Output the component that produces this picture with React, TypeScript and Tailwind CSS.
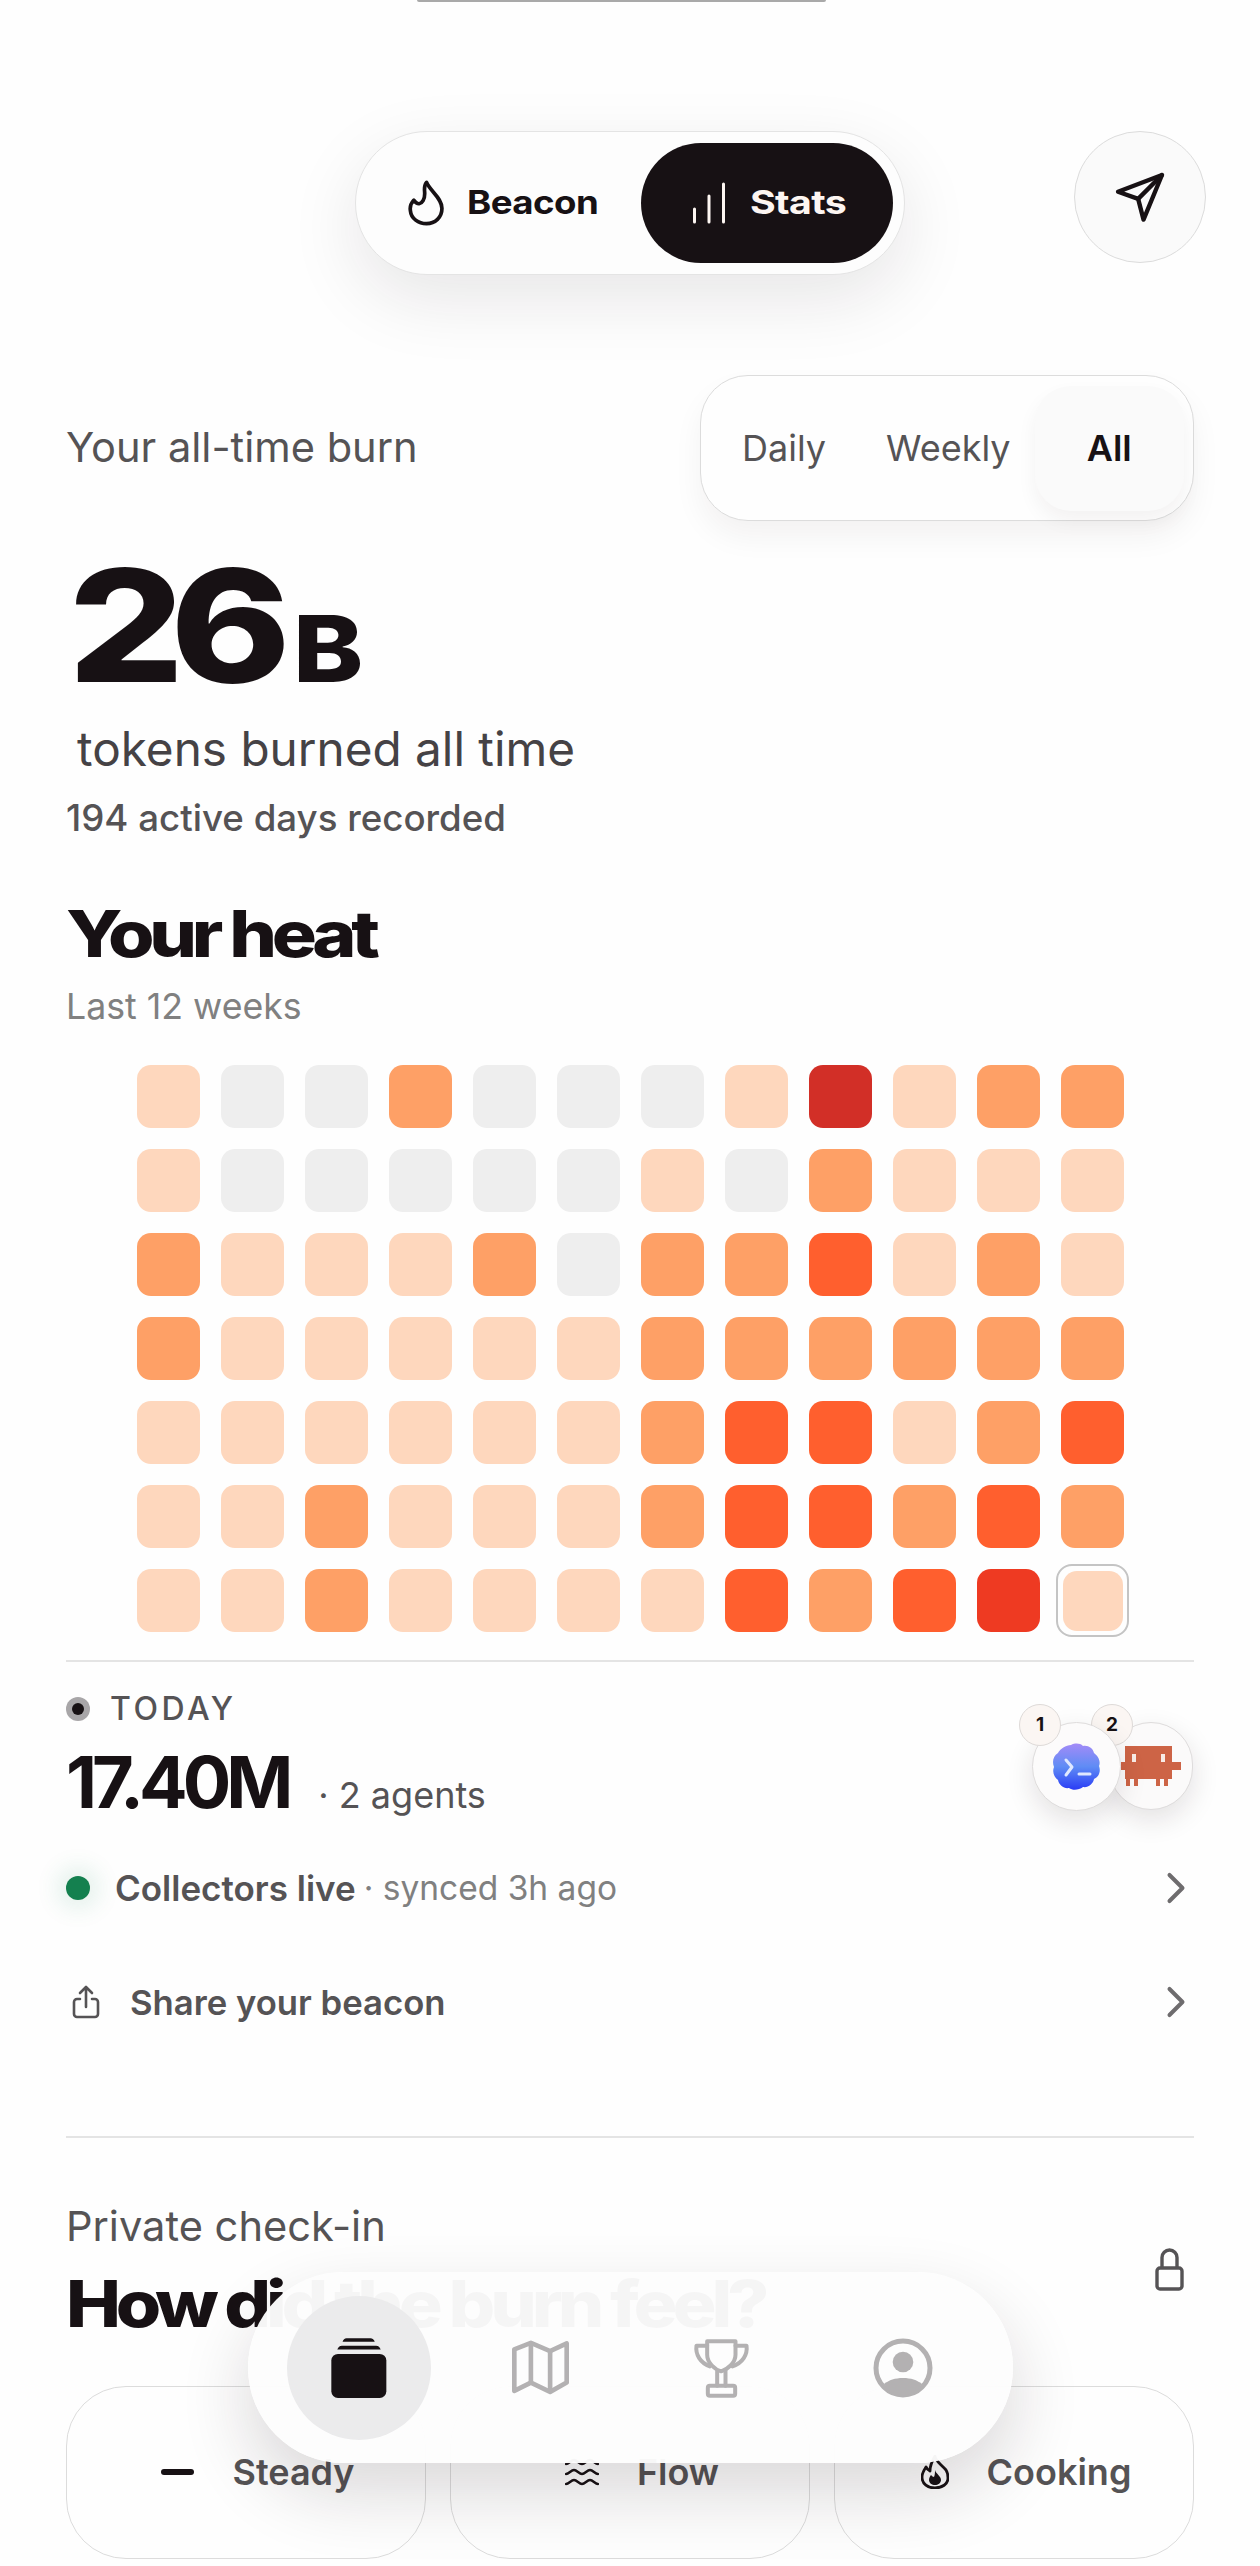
import React from 'react';
import { ChevronRight } from 'lucide-react';

const heat = [
  [1, 0, 0, 2, 0, 0, 0, 1, 5, 1, 2, 2],
  [1, 0, 0, 0, 0, 0, 1, 0, 2, 1, 1, 1],
  [2, 1, 1, 1, 2, 0, 2, 2, 3, 1, 2, 1],
  [2, 1, 1, 1, 1, 1, 2, 2, 2, 2, 2, 2],
  [1, 1, 1, 1, 1, 1, 2, 3, 3, 1, 2, 3],
  [1, 1, 2, 1, 1, 1, 2, 3, 3, 2, 3, 2],
  [1, 1, 2, 1, 1, 1, 1, 3, 2, 3, 4, 1],
];

const heatClass = [
  'bg-[#eeeeee]',
  'bg-[#fed7bd]',
  'bg-[#fea066]',
  'bg-[#ff5f2e]',
  'bg-[#ee3a22]',
  'bg-[#d22f27]',
];

const FlameIcon = () => (
  <svg viewBox="55 65 110 137" fill="none" stroke="#171114" strokeWidth="11" strokeLinecap="round" strokeLinejoin="round" className="h-[46px] w-[37px]">
    <path d="M110 72C96 88 112 108 100 126C94 136 84 142 72 125C64 134 60 144 62 156C64 180 86 195 110 195C136 195 156 176 156 150C156 118 122 100 110 72Z" />
  </svg>
);

const PlaneIcon = () => (
  <svg viewBox="40 35 155 155" fill="none" stroke="#171114" strokeWidth="13" strokeLinejoin="round" strokeLinecap="round" className="h-[52px] w-[52px]">
    <path d="M183 47 52 97l60 21 16 62z" />
    <path d="M183 47 112 118" />
  </svg>
);

const ShareIcon = () => (
  <svg viewBox="0 0 28 34" fill="none" stroke="#555355" strokeWidth="2.600" strokeLinecap="round" strokeLinejoin="round" className="h-[34px] w-[28px]">
    <path d="M14 22V2M8 8l6-6 6 6" />
    <path d="M8 14H5a3 3 0 0 0-3 3v12a3 3 0 0 0 3 3h18a3 3 0 0 0 3-3V17a3 3 0 0 0-3-3h-3" />
  </svg>
);

const LockIcon = () => (
  <svg viewBox="0 0 29 43" fill="none" stroke="#555355" strokeWidth="3.400" strokeLinejoin="round" className="h-[43px] w-[29px]">
    <rect x="2" y="20" width="25" height="21" rx="3" />
    <path d="M7 20V9.500a7.500 7.500 0 0 1 15 0V20" />
  </svg>
);

const AgentOne = () => (
  <svg viewBox="0 0 48 48" className="h-[48px] w-[48px]">
    <defs>
      <linearGradient id="agentBlue" x1="0" y1="0" x2="0" y2="1">
        <stop offset="0" stopColor="#a38bf7" />
        <stop offset="0.5" stopColor="#5f8cf5" />
        <stop offset="1" stopColor="#2a3cf5" />
      </linearGradient>
    </defs>
    <path d="M18 2c4-2 9-2 12 1 5-1 10 2 11 7 4 3 7 8 5 13 2 5 0 11-5 13-1 5-6 9-11 8-4 3-10 4-14 1-5 1-10-3-11-8-4-3-6-8-4-13-2-5-1-11 4-14 2-4 8-8 13-8z" fill="url(#agentBlue)" />
    <path d="M13 17l6 7-6 8" fill="none" stroke="#dfe8ff" strokeWidth="3" strokeLinecap="round" strokeLinejoin="round" />
    <path d="M26 31h11" stroke="#dfe8ff" strokeWidth="3" strokeLinecap="round" />
  </svg>
);

const AgentTwo = () => (
  <svg viewBox="0 0 60 40" className="h-[40px] w-[60px]" fill="#cd6446">
    <path d="M4 0h47v16h9v8h-9v9h-4v7h-4v-7h-4v7h-4v-7H17v7h-4v-7H9v7H5v-7H4v-9H0v-8h4z" />
    <rect x="11" y="8" width="4" height="8" fill="#f8ecE6" />
    <rect x="40" y="8" width="4" height="8" fill="#f8ecE6" />
  </svg>
);

const StackIcon = () => (
  <svg viewBox="30 45 175 185" className="h-[62px] w-[58px]" fill="#171114">
    <path d="M68 58c2-6 6-10 12-10h72c6 0 11 4 13 10z" />
    <path d="M52 82c2-7 7-12 14-12h103c7 0 12 5 14 12z" />
    <rect x="34" y="95" width="166" height="133" rx="20" />
  </svg>
);

const MapIcon = () => (
  <svg viewBox="570 62 178 165" fill="none" stroke="#b3b1b2" strokeWidth="14" strokeLinejoin="round" className="h-[55px] w-[59px]">
    <path d="M580 90l50-20 58 25 50-23v118l-50 28-58-28-50 25z" />
    <path d="M630 70v120M688 95v123" />
  </svg>
);

const TrophyIcon = () => (
  <svg viewBox="38 55 170 180" fill="none" stroke="#b3b1b2" strokeWidth="12" strokeLinejoin="round" strokeLinecap="round" className="h-[60px] w-[57px]">
    <path d="M80 65h85v40c0 25-25 45-43 50-18-5-42-25-42-50z" />
    <path d="M80 78H48c-4 27 12 52 40 62M165 78h33c4 27-12 52-42 62" />
    <path d="M110 155v43M135 155v43" />
    <rect x="82" y="198" width="82" height="30" rx="6" />
  </svg>
);

const AccountIcon = () => (
  <svg viewBox="0 0 60 60" className="h-[60px] w-[60px]">
    <circle cx="30" cy="30" r="27" fill="none" stroke="#b3b1b2" strokeWidth="5" />
    <circle cx="30" cy="24" r="10.300" fill="#b3b1b2" />
    <path d="M11 46c5-4 11-6 19-6s14 2 19 6c-5 7-12 11-19 11s-14-4-19-11z" fill="#b3b1b2" />
  </svg>
);

const MoodIcon = ({ kind }: { kind: string }) => {
  if (kind === 'steady') return <span className="h-[6px] w-[33px] rounded-full bg-[#171114]" />;
  if (kind === 'flow')
    return (
      <svg viewBox="0 0 34 30" fill="none" stroke="#171114" strokeWidth="2.400" strokeLinecap="round" className="h-[30px] w-[34px]">
        <path d="M1 7c3 0 5-4 8-4s5 4 8 4 5-4 8-4 5 4 8 4" />
        <path d="M1 17c3 0 5-4 8-4s5 4 8 4 5-4 8-4 5 4 8 4" />
        <path d="M1 27c3 0 5-4 8-4s5 4 8 4 5-4 8-4 5 4 8 4" />
      </svg>
    );
  return (
    <svg viewBox="0 0 28 34" className="h-[34px] w-[28px]" fill="none">
      <path d="M14 1c0 5 6 8 11 14 2 3 2 6 2 8 0 6-6 10-13 10S1 29 1 22c0-4 2-7 4-10 1 2 2 3 4 4 0-5 2-10 5-15z" stroke="#171114" strokeWidth="2.800" strokeLinejoin="round" />
      <path d="M14 15c1 4 6 6 6 10 0 3-3 5-6 5s-6-2-6-5c0-2 1-4 2-5 1 1 2 2 3 2 1-2 1-5 1-7z" fill="#171114" />
    </svg>
  );
};

const App: React.FC = () => {
  return (
    <div className="relative h-[2566px] w-[1260px] overflow-hidden bg-[#fefefe] font-['Inter',sans-serif] text-[#171114]">
      <div className="absolute left-[417px] top-0 h-[2px] w-[409px] rounded-b-full bg-[#a9a9a9]" />

      <header className="grid grid-cols-[1fr_auto_1fr] items-start pt-[131px]">
        <div />
        <div className="flex h-[144px] w-[550px] items-center justify-between rounded-full border border-[#e4e4e4] bg-[#fdfdfd] pl-[52px] pr-[11px] shadow-[0_24px_70px_rgba(30,20,25,0.10)]">
          <div className="flex items-center gap-[22px]">
            <FlameIcon />
            <span className="w-[130px] origin-left scale-x-[1.11] text-[33px] font-bold tracking-[-0.5px]">Beacon</span>
          </div>
          <div className="flex h-[120px] w-[252px] items-center gap-[25px] rounded-full bg-[#171114] pl-[52px] text-[#fdf6f2]">
            <svg viewBox="0 0 32 42" stroke="currentColor" strokeWidth="3" strokeLinecap="round" className="h-[42px] w-[32px]">
              <path d="M1.500 40V27M16 40V14M30.500 40V2" />
            </svg>
            <span className="w-[94px] origin-left scale-x-[1.19] text-[33px] font-bold tracking-[-0.5px]">Stats</span>
          </div>
        </div>
        <div className="flex justify-end pr-[54px]">
          <button className="flex h-[132px] w-[132px] items-center justify-center rounded-full border border-[#dcdcdc] bg-[#fafafa]">
            <PlaneIcon />
          </button>
        </div>
      </header>

      <main className="px-[66px]">
        <section className="mt-[100px] flex items-center justify-between">
          <h2 className="-mt-[2px] text-[41.600px] text-[#555355]">Your all-time burn</h2>
          <div className="flex h-[146px] w-[494px] items-center rounded-[48px] border border-[#dcdcdc] bg-[#fefefe] pl-[41px] pr-[9px] shadow-[0_16px_30px_rgba(30,20,25,0.05)]">
            <span className="text-[36px] text-[#555355]">Daily</span>
            <span className="ml-[60px] text-[36px] text-[#555355]">Weekly</span>
            <span className="ml-[24px] flex h-[125px] w-[150px] items-center justify-center rounded-[36px] bg-[#fafafa] text-[36px] font-semibold text-[#171114] shadow-[0_10px_20px_rgba(30,20,25,0.05)]">All</span>
          </div>
        </section>

        <section className="mt-[20px]">
          <div className="flex h-[170px] items-baseline pl-[2px]">
            <span className="w-[218px] origin-left scale-x-[1.17] text-[156px] font-extrabold leading-[170px] tracking-[-12px]">26</span>
            <span className="origin-left scale-x-[1.15] pl-[6px] text-[92px] font-extrabold leading-none">B</span>
          </div>
          <p className="mt-[10px] pl-[11px] text-[47.700px] leading-[56px] text-[#454245]">tokens burned all time</p>
          <p className="mt-[19px] text-[36.700px] font-medium leading-[44px] text-[#555355]">194 active days recorded</p>
        </section>

        <section className="mt-[58px]">
          <h2 className="origin-left scale-x-[1.175] text-[64px] font-extrabold leading-[72px] tracking-[-4.500px]">Your heat</h2>
          <p className="mt-[14px] text-[35.700px] leading-[44px] text-[#808080]">Last 12 weeks</p>
          <div className="ml-[71px] mt-[37px] grid w-[987px] grid-cols-12 gap-[21px]">
            {heat.flatMap((row, r) =>
              row.map((level, c) => {
                const isToday = r === 6 && c === 11;
                return (
                  <div key={`${r}-${c}`} className="relative h-[63px] w-[63px]">
                    <div className={`rounded-[14px] ${isToday ? 'm-[1.5px] h-[60px] w-[60px]' : 'h-full w-full'} ${heatClass[level]}`} />
                    {isToday && <div className="absolute -inset-[5px] rounded-[16px] border-2 border-[#c4c4c4]" />}
                  </div>
                );
              })
            )}
          </div>
        </section>

        <section className="mt-[28px] border-t-2 border-[#e4e4e4] pt-[30px]">
          <div className="flex items-start justify-between">
            <div>
              <div className="flex items-center gap-[20px]">
                <span className="flex h-[24px] w-[24px] items-center justify-center rounded-full bg-[#a8a6a8]">
                  <span className="h-[12px] w-[12px] rounded-full bg-[#171114]" />
                </span>
                <span className="text-[32px] font-medium leading-[34px] tracking-[3.500px] text-[#555355]">TODAY</span>
              </div>
              <div className="mt-[14px] flex items-baseline">
                <span className="text-[72px] font-bold leading-[84px] tracking-[-5px]">17.40M</span>
                <span className="ml-[30px] text-[36px] text-[#555355]">· 2 agents</span>
              </div>
            </div>
            <div className="relative mr-[1px] mt-[12px] h-[108px] w-[174px]">
              <div className="absolute left-[90px] top-[18px] flex h-[88px] w-[84px] items-center justify-center rounded-full border border-[#dedcdc] bg-[#fbfafa] shadow-[0_10px_28px_rgba(30,20,25,0.12)]">
                <AgentTwo />
              </div>
              <div className="absolute left-[72px] top-0 flex h-[42px] w-[42px] items-center justify-center rounded-full border border-[#dedad8] bg-[#fbf6f3] text-[19px] font-bold">2</div>
              <div className="absolute left-[13px] top-[18px] flex h-[89px] w-[89px] items-center justify-center rounded-full border border-[#dedcdc] bg-[#fcfbfb] shadow-[0_10px_28px_rgba(30,20,25,0.12)]">
                <AgentOne />
              </div>
              <div className="absolute left-0 top-0 flex h-[42px] w-[42px] items-center justify-center rounded-full border border-[#dedad8] bg-[#fbf6f3] text-[19px] font-bold">1</div>
            </div>
          </div>

          <div className="mt-[38px] flex items-center justify-between">
            <div className="flex items-center">
              <span className="h-[24px] w-[24px] rounded-full bg-[#14804f] shadow-[0_0_24px_8px_rgba(20,128,79,0.12)]" />
              <span className="ml-[25px] text-[35px] font-semibold text-[#555355]">Collectors live</span>
              <span className="ml-[8px] text-[33.500px] text-[#808080]">· synced 3h ago</span>
            </div>
            <ChevronRight size={52} strokeWidth={1.85} className="-mr-[8px] text-[#6e6c6e]" />
          </div>

          <div className="mt-[61px] flex items-center justify-between">
            <div className="flex items-center">
              <span className="ml-[6px]"><ShareIcon /></span>
              <span className="ml-[30px] text-[34.700px] font-semibold text-[#555355]">Share your beacon</span>
            </div>
            <ChevronRight size={52} strokeWidth={1.85} className="-mr-[8px] text-[#6e6c6e]" />
          </div>
        </section>

        <section className="mt-[108px] border-t-2 border-[#e4e4e4] pt-[64px]">
          <div className="flex items-center justify-between">
            <div>
              <p className="text-[41.600px] leading-[48px] text-[#555355]">Private check-in</p>
              <h2 className="mt-[18px] origin-left scale-x-[1.147] text-[64px] font-extrabold leading-[72px] tracking-[-4.500px]">How did the burn feel?</h2>
            </div>
            <span className="-mt-[2px] mr-[10px]"><LockIcon /></span>
          </div>
          <div className="mt-[46px] grid grid-cols-3 gap-[24px]">
            {[
              ['steady', 'Steady'],
              ['flow', 'Flow'],
              ['cooking', 'Cooking'],
            ].map(([kind, label]) => (
              <div key={kind} className="flex h-[173px] items-center justify-center gap-[38px] rounded-[60px] border border-[#dcdcdc] pl-[24px]">
                <MoodIcon kind={kind} />
                <span className="text-[36px] font-semibold text-[#555355]">{label}</span>
              </div>
            ))}
          </div>
        </section>
      </main>

      <nav className="absolute left-[248px] top-[2272px] flex h-[191px] w-[765px] items-center rounded-full bg-[#fdfdfd]/97 pl-[39px] shadow-[0_30px_70px_rgba(30,20,25,0.16)]">
        <div className="flex h-[144px] w-[144px] items-center justify-center rounded-full bg-[#ebebec]">
          <StackIcon />
        </div>
        <span className="ml-[80px]"><MapIcon /></span>
        <span className="ml-[123px]"><TrophyIcon /></span>
        <span className="ml-[123px]"><AccountIcon /></span>
      </nav>
    </div>
  );
};

export default App;
